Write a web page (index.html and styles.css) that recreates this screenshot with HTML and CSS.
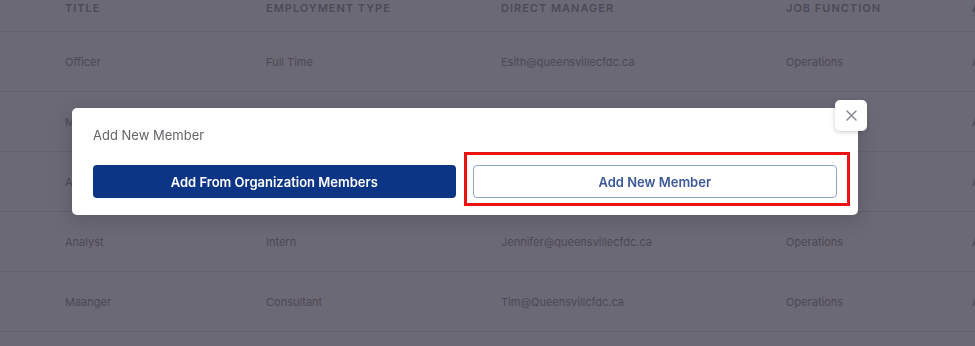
FILE: index.html
```html
<!DOCTYPE html>
<html>
<head>
<meta charset="utf-8">
<link rel="stylesheet" href="styles.css">
</head>
<body>
<div class="table">
  <div class="row head">
    <div class="c c1">Title</div>
    <div class="c c2">Employment Type</div>
    <div class="c c3">Direct Manager</div>
    <div class="c c4">Job Function</div>
    <div class="c c5">Action</div>
  </div>
  <div class="row">
    <div class="c c1">Officer</div>
    <div class="c c2">Full Time</div>
    <div class="c c3">Esith@queensvillecfdc.ca</div>
    <div class="c c4">Operations</div>
    <div class="c c5">Active</div>
  </div>
  <div class="row">
    <div class="c c1">Manager</div>
    <div class="c c2"></div>
    <div class="c c3"></div>
    <div class="c c4"></div>
    <div class="c c5">Active</div>
  </div>
  <div class="row">
    <div class="c c1">Associate</div>
    <div class="c c2"></div>
    <div class="c c3"></div>
    <div class="c c4"></div>
    <div class="c c5">Active</div>
  </div>
  <div class="row">
    <div class="c c1">Analyst</div>
    <div class="c c2">Intern</div>
    <div class="c c3">Jennifer@queensvillecfdc.ca</div>
    <div class="c c4">Operations</div>
    <div class="c c5">Active</div>
  </div>
  <div class="row last">
    <div class="c c1">Maanger</div>
    <div class="c c2">Consultant</div>
    <div class="c c3">Tim@Queensvillcfdc.ca</div>
    <div class="c c4">Operations</div>
    <div class="c c5">Active</div>
  </div>
</div>

<div class="overlay">
  <div class="modal">
    <div class="modal-title">Add New Member</div>
    <div class="actions">
      <button class="btn primary">Add From Organization Members</button>
      <button class="btn outline">Add New Member</button>
    </div>
    <div class="highlight"></div>
    <button class="close" aria-label="Close">
      <svg width="11" height="11" viewBox="0 0 11 11"><path d="M1 1 L10 10 M10 1 L1 10" stroke="#8a8a8f" stroke-width="1.5" stroke-linecap="round" fill="none"/></svg>
    </button>
  </div>
</div>
</body>
</html>
```

FILE: styles.css
```css
html, body {
  margin: 0;
  padding: 0;
  width: 975px;
  height: 346px;
  overflow: hidden;
  background: #6c6976;
  font-family: Inter, "Noto Sans", sans-serif;
}

.table {
  width: 1100px;
}

.row {
  display: flex;
  align-items: center;
  height: 59px;
  border-bottom: 1px solid #64616e;
  padding-left: 65px;
  font-size: 11px;
  color: #4b4854;
}

.row.head {
  height: 31px;
  align-items: flex-start;
  font-size: 11px;
  font-weight: 600;
  letter-spacing: 1px;
  text-transform: uppercase;
  color: #4d4a56;
}

.row.head .c {
  line-height: 16px;
}

.c { flex: none; white-space: nowrap; }
.c1 { width: 201px; }
.c2 { width: 235px; }
.c3 { width: 285px; }
.c4 { width: 186px; }
.c5 { width: 100px; }

.overlay {
  position: fixed;
  inset: 0;
  padding: 108px 0 0 72px;
}

.modal {
  position: relative;
  width: 786px;
  box-sizing: border-box;
  background: #ffffff;
  border-radius: 5px;
  padding: 19px 21px 17px 21px;
  box-shadow: 0 4px 18px rgba(40, 38, 50, 0.25);
}

.modal-title {
  font-size: 13px;
  line-height: 16px;
  color: #64646b;
  margin-bottom: 22px;
}

.actions {
  display: flex;
  gap: 17px;
}

.btn {
  flex: 1;
  height: 33px;
  border-radius: 4px;
  font-family: Inter, "Noto Sans", sans-serif;
  font-size: 13px;
  font-weight: 600;
  cursor: pointer;
  box-sizing: border-box;
}

.btn.primary {
  background: #0c3585;
  color: #ffffff;
  border: none;
}

.btn.outline {
  background: #ffffff;
  color: #3c5898;
  border: 1.5px solid #8fa3cc;
}

.highlight {
  position: absolute;
  left: 392px;
  top: 44px;
  width: 386px;
  height: 54px;
  box-sizing: border-box;
  border: 3px solid #ee1111;
  pointer-events: none;
}

.close {
  position: absolute;
  top: -8px;
  right: -9px;
  width: 32px;
  height: 31px;
  padding: 0;
  border: none;
  background: #ffffff;
  border-radius: 5px;
  box-shadow: 0 1px 4px rgba(40, 38, 50, 0.25);
  display: flex;
  align-items: center;
  justify-content: center;
}
```
